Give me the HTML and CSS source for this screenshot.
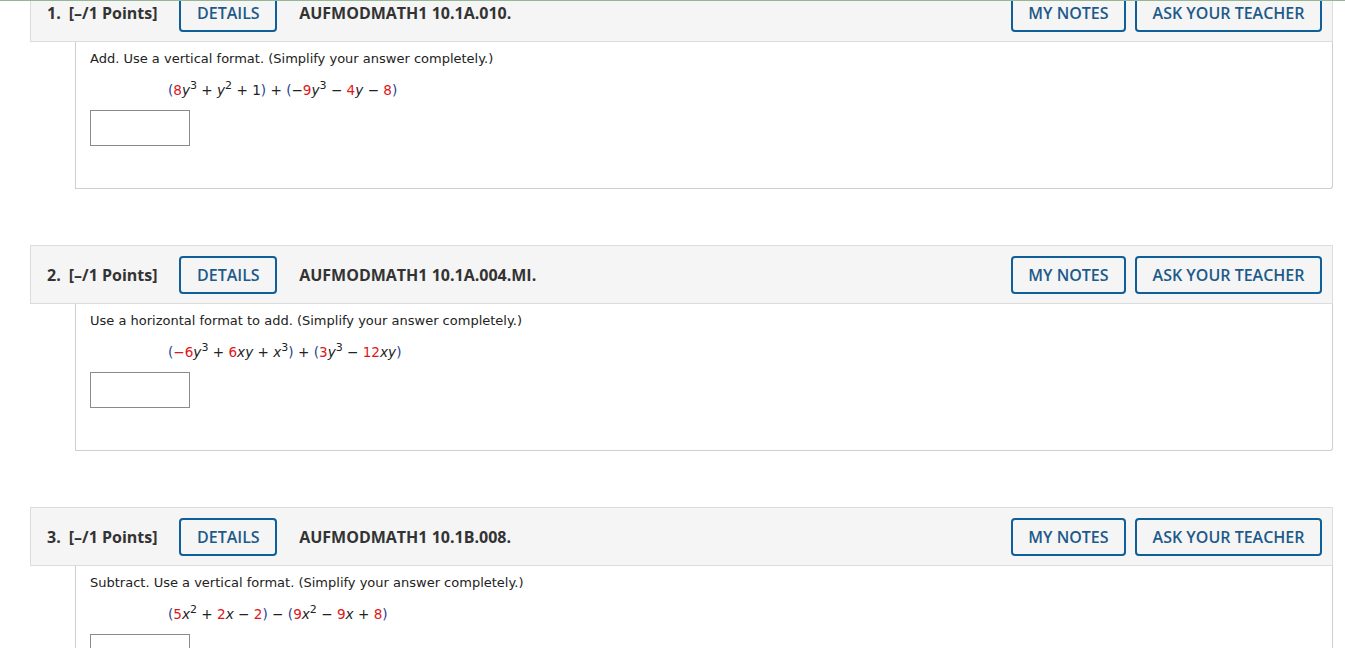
FILE: index.html
```html
<!DOCTYPE html>
<html>
<head>
<meta charset="utf-8">
<link rel="stylesheet" href="styles.css">
</head>
<body>
<div class="topline"></div>
<main class="page">
  <section class="question first">
    <header class="qhead">
      <span class="qnum">1.</span>
      <span class="qpts">[–/1 Points]</span>
      <button class="btn">DETAILS</button>
      <span class="qid">AUFMODMATH1 10.1A.010.</span>
      <span class="spacer"></span>
      <button class="btn">MY NOTES</button>
      <button class="btn">ASK YOUR TEACHER</button>
    </header>
    <div class="qbody">
      <p class="prompt">Add. Use a vertical format. (Simplify your answer completely.)</p>
      <p class="math"><span class="p">(</span><span class="r">8</span><i>y</i><sup>3</sup> + <i>y</i><sup>2</sup> + 1<span class="p">)</span> + <span class="p">(</span>−<span class="r">9</span><i>y</i><sup>3</sup> − <span class="r">4</span><i>y</i> − <span class="r">8</span><span class="p">)</span></p>
      <input class="answer" type="text">
    </div>
  </section>

  <section class="question">
    <header class="qhead">
      <span class="qnum">2.</span>
      <span class="qpts">[–/1 Points]</span>
      <button class="btn">DETAILS</button>
      <span class="qid">AUFMODMATH1 10.1A.004.MI.</span>
      <span class="spacer"></span>
      <button class="btn">MY NOTES</button>
      <button class="btn">ASK YOUR TEACHER</button>
    </header>
    <div class="qbody">
      <p class="prompt">Use a horizontal format to add. (Simplify your answer completely.)</p>
      <p class="math"><span class="p">(</span><span class="r">−6</span><i>y</i><sup>3</sup> + <span class="r">6</span><i>xy</i> + <i>x</i><sup>3</sup><span class="p">)</span> + <span class="p">(</span><span class="r">3</span><i>y</i><sup>3</sup> − <span class="r">12</span><i>xy</i><span class="p">)</span></p>
      <input class="answer" type="text">
    </div>
  </section>

  <section class="question">
    <header class="qhead">
      <span class="qnum">3.</span>
      <span class="qpts">[–/1 Points]</span>
      <button class="btn">DETAILS</button>
      <span class="qid">AUFMODMATH1 10.1B.008.</span>
      <span class="spacer"></span>
      <button class="btn">MY NOTES</button>
      <button class="btn">ASK YOUR TEACHER</button>
    </header>
    <div class="qbody">
      <p class="prompt">Subtract. Use a vertical format. (Simplify your answer completely.)</p>
      <p class="math"><span class="p">(</span><span class="r">5</span><i>x</i><sup>2</sup> + <span class="r">2</span><i>x</i> − <span class="r">2</span><span class="p">)</span> − <span class="p">(</span><span class="r">9</span><i>x</i><sup>2</sup> − <span class="r">9</span><i>x</i> + <span class="r">8</span><span class="p">)</span></p>
      <input class="answer" type="text">
    </div>
  </section>
</main>
</body>
</html>
```
FILE: styles.css
```css
html, body {
  margin: 0;
  padding: 0;
  background: #fff;
  overflow: hidden;
}
.topline {
  position: fixed;
  top: 0;
  left: 0;
  right: 0;
  height: 1px;
  background: #95b694;
  z-index: 5;
}
.page {
  padding: 0 12px 0 30px;
  display: flex;
  flex-direction: column;
  gap: 56px;
}
.question.first {
  margin-top: -17px;
}
.qhead {
  display: flex;
  align-items: center;
  height: 57px;
  padding: 0 10px 0 16px;
  background: #f5f5f5;
  border: 1px solid #dcdcdc;
  font-family: "Open Sans", sans-serif;
  color: #333;
}
.qnum {
  font-weight: 700;
  font-size: 16px;
  margin-right: 8px;
}
.qpts {
  font-weight: 700;
  font-size: 16px;
  margin-right: 22px;
}
.qid {
  font-weight: 700;
  font-size: 16px;
  margin-left: 22px;
}
.spacer {
  flex: 1;
}
.btn {
  height: 38px;
  padding: 0 15.5px;
  border: 2px solid #0f5f98;
  border-radius: 4px;
  background: #f5f5f5;
  color: #1d5a8a;
  font-family: "Open Sans", sans-serif;
  font-weight: 600;
  font-size: 16px;
  margin-left: 9px;
}
.qhead .btn:first-of-type {
  margin-left: 0;
}
.qbody {
  margin-left: 45px;
  border: 1px solid #cfcfcf;
  border-top: none;
  border-radius: 0 0 3px 0;
  padding: 8px 14px 42px;
  font-family: "DejaVu Sans", Verdana, sans-serif;
  font-size: 13px;
  color: #222;
}
.prompt {
  margin: 0;
  line-height: 18px;
}
.math {
  margin: 13px 0 0 78px;
  line-height: 18px;
  font-size: 13.6px;
  color: #222;
}
.math .r {
  color: #e0161b;
}
.math .p {
  color: #1f3f8f;
}
.math sup {
  font-size: 11px;
  line-height: 0;
  vertical-align: 6px;
}
.answer {
  display: block;
  margin-top: 11px;
  width: 100px;
  height: 36px;
  box-sizing: border-box;
  border: 1px solid #8a8a8a;
  padding: 0;
}
```
